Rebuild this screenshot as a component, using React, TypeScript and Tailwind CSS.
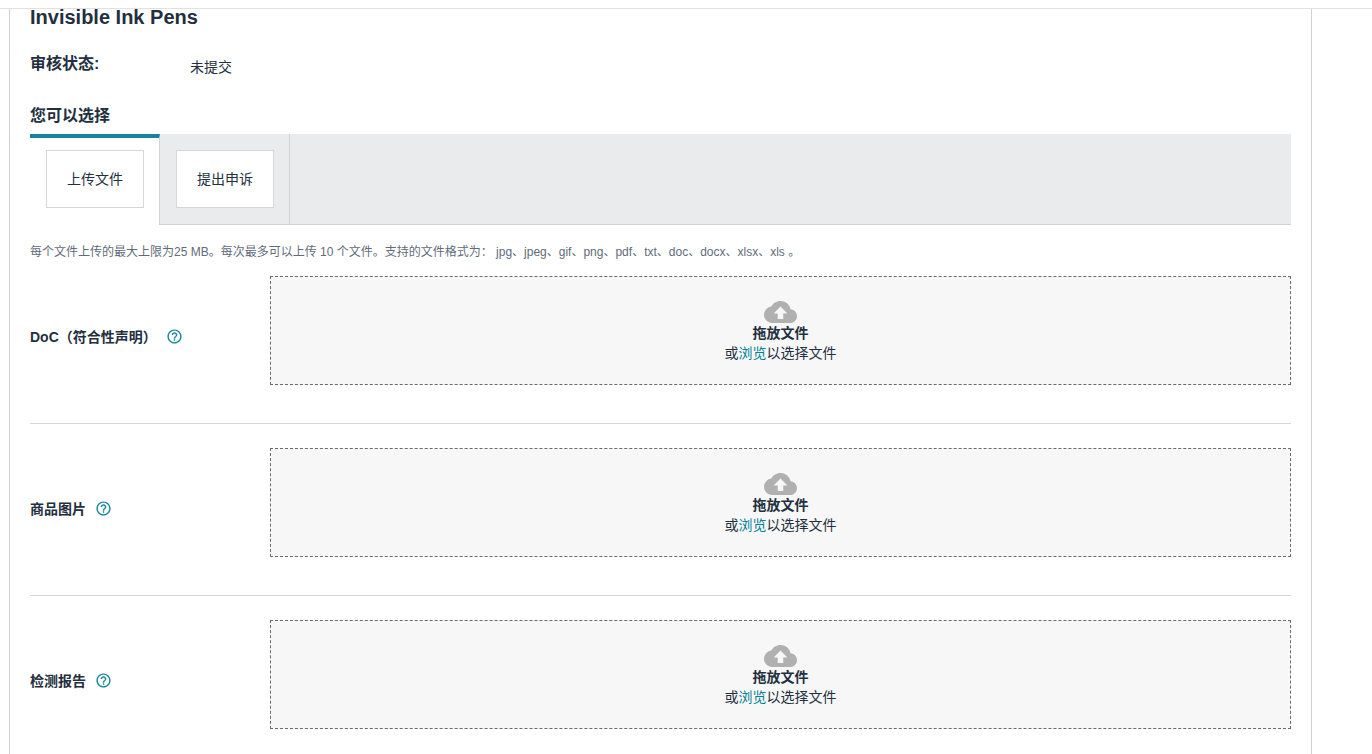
import { useState } from "react";
import { MdCloudUpload, MdHelpOutline } from "react-icons/md";

const documents = ["DoC（符合性声明）", "商品图片", "检测报告"];
const tabs = ["上传文件", "提出申诉"];

function UploadRow({ name }: { name: string }) {
  return (
    <section
      aria-label={name}
      className="flex border-b border-[#d5d6d8] pt-6 pb-[38px] first:pt-0 last:border-b-0 last:pb-6"
    >
      <div className="flex w-60 shrink-0 items-center gap-[10px] pt-3">
        <h3 className="text-sm leading-5 font-bold">{name}</h3>
        <button type="button" aria-label="帮助" className="text-[#16859b]">
          <MdHelpOutline className="size-[17px] -mx-px" />
        </button>
      </div>
      <div className="flex flex-1 flex-col items-center border border-dashed border-[#6b6b6b] bg-[#f7f7f7] pt-6 pb-[21px] text-sm leading-5">
        <svg viewBox="0 4 24 16" className="h-[22px] w-[33px] text-[#b0b0b0]" aria-hidden="true">
          <MdCloudUpload size={24} y={0} />
        </svg>
        <strong className="font-bold">拖放文件</strong>
        <p>
          或
          <button type="button" className="text-[#008296]">
            浏览
          </button>
          以选择文件
        </p>
      </div>
    </section>
  );
}

export default function App() {
  const [active, setActive] = useState(0);

  return (
    <div className="flex min-h-screen flex-col bg-white font-['Liberation_Sans','Noto_Sans_CJK_SC',sans-serif] text-[#232f3e]">
      <header className="h-[9px] shrink-0 border-b border-[#e1e1e1]" />
      <main className="mr-[60px] ml-[9px] flex-1 border-x border-[#d2d2d2] px-5">
        <h1 className="text-xl leading-4 font-bold">Invisible Ink Pens</h1>
        <dl className="mt-[27px] flex">
          <dt className="w-40 text-base leading-6 font-bold">审核状态:</dt>
          <dd className="pt-[5px] text-sm leading-5">未提交</dd>
        </dl>
        <h2 className="mt-[27px] text-base leading-6 font-bold">您可以选择</h2>

        <div className="mt-[6px] flex">
          {tabs.map((tab, index) => (
            <div
              key={tab}
              className={
                index === active
                  ? "border-t-4 border-r border-t-[#16859b] border-r-[#d2d3d7] pt-3 pr-[15px] pb-[17px] pl-4"
                  : "border-r border-b border-[#d2d3d7] bg-[#eaebed] pt-4 pr-[15px] pb-4 pl-4"
              }
            >
              <button
                type="button"
                onClick={() => setActive(index)}
                className="border border-[#d5d6d8] bg-white px-5 py-[18px] text-sm leading-5"
              >
                {tab}
              </button>
            </div>
          ))}
          <div className="flex-1 border-b border-[#d2d3d7] bg-[#eaebed]" />
        </div>

        <p className="mt-[19px] text-xs leading-4 text-[#5f6b7a]">
          每个文件上传的最大上限为25 MB。每次最多可以上传 10 个文件。支持的文件格式为：
          {" "}jpg、jpeg、gif、png、pdf、txt、doc、docx、xlsx、xls 。
        </p>

        <div className="mt-[16px]">
          {documents.map((name) => (
            <UploadRow key={name} name={name} />
          ))}
        </div>
      </main>
    </div>
  );
}
